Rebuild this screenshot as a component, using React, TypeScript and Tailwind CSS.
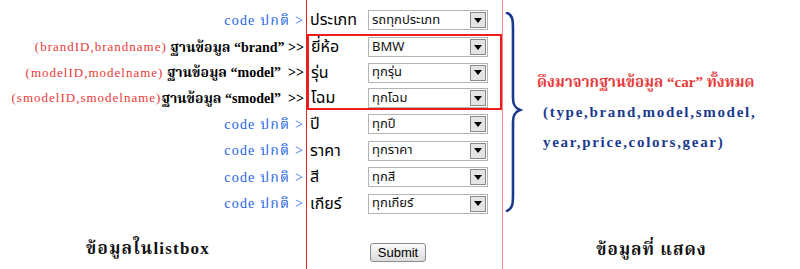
import React from "react";

const thaiSans = { fontFamily: 'Tahoma, "Noto Sans Thai", "Noto Sans", "DejaVu Sans", sans-serif' };
const thaiSerif = { fontFamily: '"Liberation Serif", "Noto Serif Thai", "Noto Sans Thai", serif' };

function Select({ value }: { value: string }) {
  return (
    <div className="flex h-[20px] w-[120px] items-stretch border border-[#b4b4b4] bg-white p-[1px]">
      <div className="flex flex-1 items-center pl-[2px] text-[13px] leading-none text-[#111]" style={thaiSans}>
        {value}
      </div>
      <div className="flex w-[16px] items-center justify-center border border-[#8a8a8a] bg-[#e4e4e4]">
        <svg width="8" height="5" viewBox="0 0 8 5">
          <path d="M0 0 L8 0 L4 5 Z" fill="#000" />
        </svg>
      </div>
    </div>
  );
}

function Row({ label, value, labelW, pl }: { label: string; value: string; labelW: string; pl: string }) {
  return (
    <div className={`flex h-[20px] items-center ${pl}`}>
      <div className={`${labelW} text-[16px] leading-none text-black`} style={thaiSans}>
        {label}
      </div>
      <Select value={value} />
    </div>
  );
}

function CodeLabel() {
  return (
    <div className="flex h-[20px] items-center justify-end pr-[2px] text-[14px] tracking-[1.2px] text-[#2462e6]" style={thaiSerif}>
      code ปกติ &gt;
    </div>
  );
}

function DbLabel({ ids, name, extra }: { ids: string; name: string; extra?: boolean }) {
  return (
    <div className="flex h-[20px] items-center justify-end whitespace-pre pr-[2px]" style={thaiSerif}>
      <span className="text-[13px] tracking-[1px] text-[#e83a3a]">{ids}</span>
      <span className="text-[14px] font-bold tracking-[0px] text-black">
        {name}
        {extra ? "  >>" : " >>"}
      </span>
    </div>
  );
}

export default function App() {
  return (
    <div className="flex h-[269px] w-[800px] bg-white">
      {/* left column */}
      <div className="flex w-[307px] flex-col border-r border-[#e52222] pt-[10px]">
        <CodeLabel />
        <div className="mt-[7px] flex flex-col gap-[5.5px]">
          <DbLabel ids="(brandID,brandname)" name=" ฐานข้อมูล “brand”" />
          <DbLabel ids="(modelID,modelname)" name=" ฐานข้อมูล “model”" extra />
          <DbLabel ids="(smodelID,smodelname)" name="ฐานข้อมูล “smodel”" extra />
        </div>
        <div className="mt-[6px] flex flex-col gap-[6.5px]">
          <CodeLabel />
          <CodeLabel />
          <CodeLabel />
          <CodeLabel />
        </div>
        <div className="mt-[25.5px] h-[20px] pr-[10px] text-center text-[17px] font-bold leading-[20px] tracking-[1.2px] text-[#111]" style={thaiSerif}>
          ข้อมูลในlistbox
        </div>
      </div>

      {/* middle column */}
      <div className="flex w-[196px] flex-col border-r border-[#f08a8a] pt-[10px]">
        <Row label="ประเภท" value="รถทุกประเภท" labelW="w-[58px]" pl="pl-[3px]" />
        <div className="mt-[4px] flex flex-col gap-[5.5px] border-2 border-[#ee1c1c] pt-[1px]">
          <Row label="ยี่ห้อ" value="BMW" labelW="w-[57px]" pl="pl-[2px]" />
          <Row label="รุ่น" value="ทุกรุ่น" labelW="w-[57px]" pl="pl-[2px]" />
          <Row label="โฉม" value="ทุกโฉม" labelW="w-[57px]" pl="pl-[2px]" />
        </div>
        <div className="mt-[4px] flex flex-col gap-[6.5px]">
          <Row label="ปี" value="ทุกปี" labelW="w-[58px]" pl="pl-[3px]" />
          <Row label="ราคา" value="ทุกราคา" labelW="w-[58px]" pl="pl-[3px]" />
          <Row label="สี" value="ทุกสี" labelW="w-[58px]" pl="pl-[3px]" />
          <Row label="เกียร์" value="ทุกเกียร์" labelW="w-[58px]" pl="pl-[3px]" />
        </div>
        <div className="mt-[29.5px] pl-[63px]">
          <button
            className="flex h-[19px] w-[56px] items-center justify-center rounded-[3px] border border-[#8c8c8c] bg-gradient-to-b from-[#fafafa] to-[#dcdcdc] text-[13px] leading-none text-black"
            style={{ fontFamily: '"Liberation Sans", Arial, sans-serif' }}
          >
            Submit
          </button>
        </div>
      </div>

      {/* right column */}
      <div className="flex flex-1 flex-col">
        <div className="flex h-[228px]">
          <svg className="ml-[2px] mt-[12px]" width="20" height="200" viewBox="0 0 20 200">
            <path
              d="M2,1 C8,3 8,9 8,18 L8,86 C8,93 10,96 15,98 C10,100 8,103 8,110 L8,182 C8,191 8,196 2,199"
              fill="none"
              stroke="#1b3a8e"
              strokeWidth="2.6"
              strokeLinecap="round"
            />
          </svg>
          <div className="ml-[12px] flex flex-col pt-[67px]" style={thaiSerif}>
            <div className="h-[30px] whitespace-nowrap text-[15px] font-bold leading-[30px] tracking-[0px] text-[#e83a3a]">
              ดึงมาจากฐานข้อมูล “car” ทั้งหมด
            </div>
            <div className="h-[30px] whitespace-nowrap pl-[6px] text-[15px] font-bold leading-[30px] tracking-[1.7px] text-[#1b3a8e]">
              (type,brand,model,smodel,
            </div>
            <div className="h-[30px] whitespace-nowrap pl-[6px] text-[15px] font-bold leading-[30px] tracking-[1.7px] text-[#1b3a8e]">
              year,price,colors,gear)
            </div>
          </div>
        </div>
        <div className="mt-[12px] h-[20px] text-center text-[17px] font-bold leading-[20px] tracking-[1px] text-[#111]" style={thaiSerif}>
          ข้อมูลที่ แสดง
        </div>
      </div>
    </div>
  );
}
